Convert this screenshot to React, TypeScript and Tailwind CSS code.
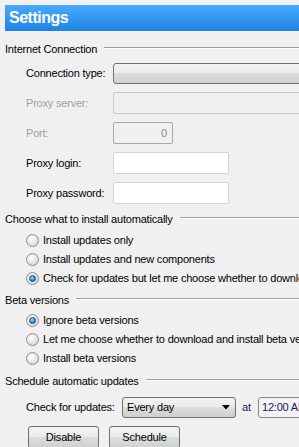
const btnBg =
  'bg-[linear-gradient(#f2f2f2_0%,#ebebeb_48%,#dddddd_50%,#cfcfcf_100%)]';

function GroupTitle({ text }: { text: string }) {
  return (
    <div className="flex h-[16px] items-center">
      <span className="whitespace-nowrap">{text}</span>
      <div className="ml-[7px] mt-[-3px] flex-1 border-t border-b border-t-[#a0a0a0] border-b-white" />
    </div>
  );
}

function FieldRow({
  label,
  disabled,
  children,
}: {
  label: string;
  disabled?: boolean;
  children: React.ReactNode;
}) {
  return (
    <div className="flex items-center">
      <span className={`w-[87px] shrink-0 whitespace-nowrap ${disabled ? 'text-[#a0a0a0]' : ''}`}>{label}</span>
      {children}
    </div>
  );
}

function Radio({ label, checked }: { label: string; checked?: boolean }) {
  return (
    <div className="flex h-[19px] items-center">
      <div className="flex h-[13px] w-[13px] shrink-0 items-center justify-center rounded-full border border-[#8e8f8f] bg-[radial-gradient(circle_at_40%_35%,#ffffff_0%,#e6e6e6_50%,#c9c9c9_100%)]">
        {checked && (
          <div className="h-[7px] w-[7px] rounded-full border border-[#1b4f7e] bg-[radial-gradient(circle_at_40%_35%,#a5e0fb_0%,#2b8fd6_55%,#0b4d8c_100%)]" />
        )}
      </div>
      <span className="ml-[4px] whitespace-nowrap">{label}</span>
    </div>
  );
}

export default function App() {
  return (
    <div className="h-[447px] w-[299px] overflow-hidden bg-[#f0f0f0] pl-[5px] pt-[5px] font-['Liberation_Sans',Arial,sans-serif] text-[11px] leading-none tracking-[-0.2px] text-black">
      <div className="flex h-[26px] items-center bg-gradient-to-b from-[#48abfd] to-[#1d83e6] pl-[4px] text-[16px] font-bold tracking-[-0.5px] text-white">
        Settings
      </div>

      <div className="mt-[10px]">
        <GroupTitle text="Internet Connection" />
      </div>

      <div className="flex flex-col gap-[8px] pl-[21px]">
        <div className="mt-[6px]">
          <FieldRow label="Connection type:">
            <div className={`h-[21px] flex-1 rounded-[3px] border border-[#707070] ${btnBg} min-w-[200px]`} />
          </FieldRow>
        </div>
        <FieldRow label="Proxy server:" disabled>
          <div className="h-[22px] min-w-[200px] flex-1 rounded-[2px] border border-[#c9c9c9] bg-[#f0f0f0]" />
        </FieldRow>
        <FieldRow label="Port:" disabled>
          <div className="flex h-[22px] w-[60px] items-center justify-end rounded-[2px] border border-[#a8a8a8] bg-[#f0f0f0] pr-[5px] text-[#8a8a8a]">
            0
          </div>
        </FieldRow>
        <FieldRow label="Proxy login:">
          <div className="h-[22px] w-[116px] rounded-[2px] border border-[#d5d5d5] bg-white" />
        </FieldRow>
        <FieldRow label="Proxy password:">
          <div className="h-[22px] w-[116px] rounded-[2px] border border-[#d5d5d5] bg-white" />
        </FieldRow>
      </div>

      <div className="mt-[7px]">
        <GroupTitle text="Choose what to install automatically" />
      </div>
      <div className="mt-[4px] pl-[21px]">
        <Radio label="Install updates only" />
        <Radio label="Install updates and new components" />
        <Radio label="Check for updates but let me choose whether to download and install them" checked />
      </div>

      <div className="mt-[4px]">
        <GroupTitle text="Beta versions" />
      </div>
      <div className="mt-[3px] pl-[21px]">
        <Radio label="Ignore beta versions" checked />
        <Radio label="Let me choose whether to download and install beta versions" />
        <Radio label="Install beta versions" />
      </div>

      <div className="mt-[5px]">
        <GroupTitle text="Schedule automatic updates" />
      </div>
      <div className="mt-[8px] flex h-[21px] items-center pl-[21px]">
        <span className="w-[96px] shrink-0 whitespace-nowrap">Check for updates:</span>
        <div className={`flex h-[21px] w-[114px] shrink-0 items-center justify-between rounded-[3px] border border-[#707070] ${btnBg} pl-[4px] pr-[5px]`}>
          <span>Every day</span>
          <svg width="8" height="5" viewBox="0 0 8 5">
            <path d="M0 0h8L4 4.5z" fill="#000" />
          </svg>
        </div>
        <span className="ml-[6px] w-[16px] shrink-0 text-[#1a1a5a]">at</span>
        <div className="flex h-[21px] min-w-[80px] shrink-0 items-center rounded-[3px] border border-[#8a8a8a] bg-[#f3f3f3] pl-[3px] text-[#1a1a5a]">
          12:00 AM
        </div>
      </div>

      <div className="mt-[8px] flex gap-[10px] pl-[23px]">
        <div className={`flex h-[23px] w-[71px] items-center justify-center rounded-[3px] border border-[#707070] ${btnBg}`}>
          Disable
        </div>
        <div className={`flex h-[23px] w-[71px] items-center justify-center rounded-[3px] border border-[#707070] ${btnBg}`}>
          Schedule
        </div>
      </div>
    </div>
  );
}
